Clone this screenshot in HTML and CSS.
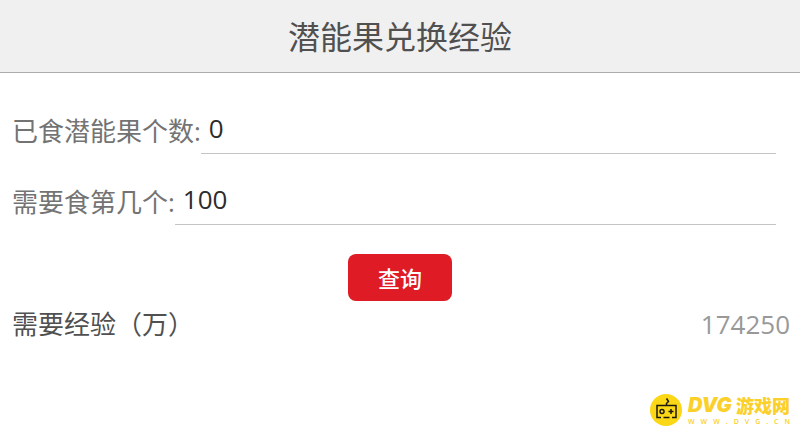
FILE: index.html
```html
<!DOCTYPE html>
<html lang="zh-CN">
<head>
    <meta charset="UTF-8">
    <meta name="viewport" content="width=device-width, initial-scale=1.0">
    <title>潜能果兑换经验</title>
    <link rel="stylesheet" href="styles.css">
</head>
<body>

    <header class="title-bar">
        <h1>潜能果兑换经验</h1>
    </header>

    <form class="query-form" onsubmit="return false">
        <div class="field">
            <label for="eaten">已食潜能果个数:</label>
            <input type="text" id="eaten" inputmode="numeric" value="0">
        </div>
        <div class="field">
            <label for="target">需要食第几个:</label>
            <input type="text" id="target" inputmode="numeric" value="100">
        </div>
        <button type="submit">查询</button>
    </form>

    <div class="result">
        <span>需要经验（万）</span>
        <output class="value" for="eaten target">174250</output>
    </div>

    <div class="watermark">
        <svg width="32" height="32" viewBox="0 0 32 32" fill="none" stroke="#1c1a10" stroke-width="1.500">
            <circle cx="16" cy="16" r="16" fill="#fbd716" stroke="none"/>
            <path d="M11 23.500H7V11.500h19v12h-4M13.500 23.500h6"/>
            <path d="M16.500 11.500V9.500l2-2-2-3"/>
            <circle cx="12" cy="17.500" r="2"/>
            <path d="M18.500 17.500h5M21 15v5"/>
        </svg>
        <div class="brand">
            <strong><i>DVG</i>游戏网</strong>
            <small><span>W</span><span>W</span><span>W</span><span>.</span><span>D</span><span>V</span><span>G</span><span>.</span><span>C</span><span>N</span></small>
        </div>
    </div>

</body>
</html>
```
FILE: styles.css
```css
* {
    box-sizing: border-box;
}
body {
    margin: 0;
    background-color: #fff;
    color: #505050;
    font-family: "Open Sans", "Noto Sans CJK SC", sans-serif;
    font-size: 26px;
    line-height: 36px;
}
.title-bar {
    padding: 15px 0 13px;
    background-color: #f0f0f0;
    border-bottom: 1px solid #acacac;
    text-align: center;
}
h1 {
    margin: 0;
    font-size: 32px;
    font-weight: 400;
    line-height: 44px;
}
.query-form {
    padding-top: 34px;
}
.field {
    display: flex;
    align-items: center;
    margin: 0 24px 24px 12px;
    color: #737373;
}
.field input {
    flex: 1;
    min-width: 0;
    height: 47px;
    padding: 0 8px 4px;
    border: none;
    border-bottom: 1px solid #c4c4c4;
    background: none;
    color: #2c2c2c;
    font: inherit;
    outline: none;
}
button {
    display: block;
    width: 104px;
    height: 47px;
    margin: 29px auto 0;
    padding: 0 0 2px;
    border: none;
    border-radius: 8px;
    background-color: #df1b26;
    color: #fff;
    font-family: inherit;
    font-size: 22px;
    font-weight: 500;
    cursor: pointer;
}
.result {
    display: flex;
    justify-content: space-between;
    padding: 5px 10px 0 12px;
}
.value {
    color: #999;
}
.watermark {
    position: absolute;
    right: 10px;
    bottom: 9px;
    display: flex;
    align-items: center;
    gap: 6px;
    color: #fbd02a;
}
.brand {
    width: 102px;
}
.brand strong {
    display: flex;
    justify-content: space-between;
    font-family: "Noto Sans CJK SC", sans-serif;
    font-size: 18px;
    font-weight: 900;
    line-height: 24px;
    white-space: nowrap;
}
.brand i {
    font-family: Inter, sans-serif;
    font-size: 20px;
}
.brand small {
    display: flex;
    justify-content: space-between;
    font-size: 7px;
    font-weight: 600;
    line-height: 10px;
}
```
